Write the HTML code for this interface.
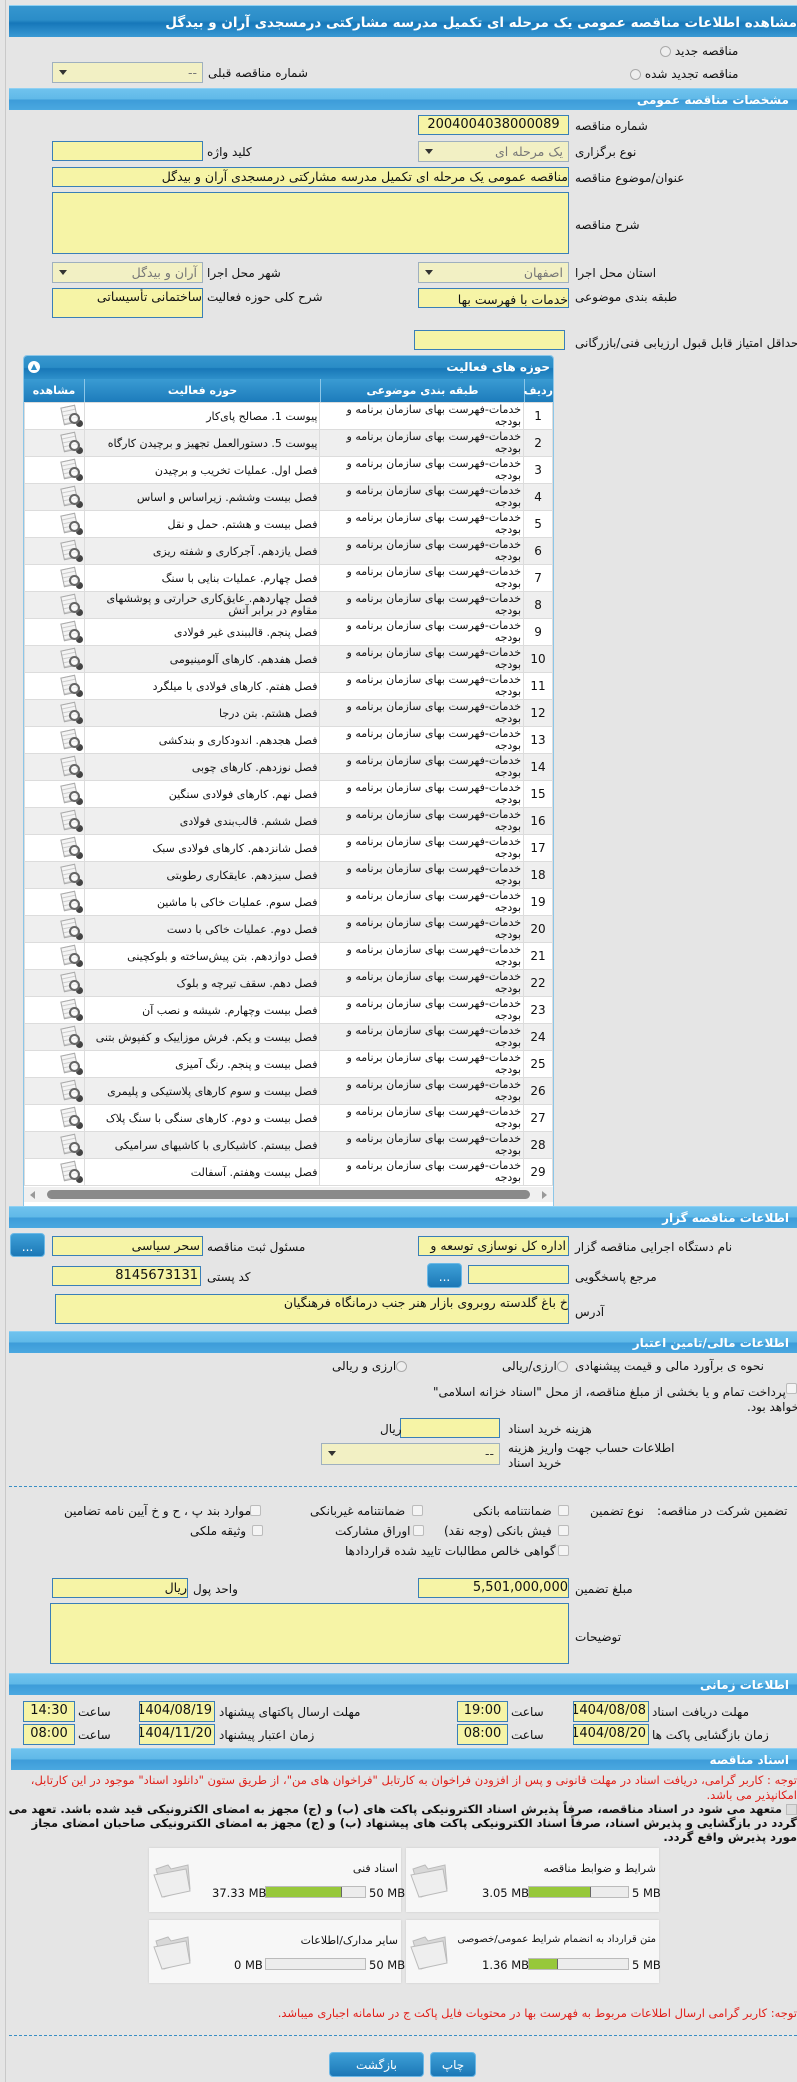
<!DOCTYPE html>
<html><head><meta charset="utf-8">
<style>
*{box-sizing:border-box;margin:0;padding:0}
body{width:797px;height:2082px;background:#e5e5e5;font-family:"DejaVu Sans","Liberation Sans",sans-serif;font-size:11px;color:#111;position:relative;overflow:hidden}
.a{position:absolute;white-space:nowrap;direction:rtl}
.l{position:absolute;white-space:nowrap;direction:rtl;font-size:12px}
.e{position:absolute;white-space:nowrap;direction:ltr;font-size:11.5px}
.in{position:absolute;background:#f6f4a6;border:1px solid #3a7fb8;direction:rtl;text-align:right;font-size:12.5px;padding:0 2px;line-height:18px;overflow:hidden;white-space:nowrap}
.sel{position:absolute;background:#f2f0c4;border:1px solid #9fb0bf;direction:rtl;font-size:12.5px;padding:0 5px;line-height:19px;color:#777;overflow:hidden;white-space:nowrap}
.sel:after{content:"";position:absolute;left:6px;top:7px;border-left:4px solid transparent;border-right:4px solid transparent;border-top:5px solid #333}
.hd{position:absolute;left:9px;right:0;height:22px;background:linear-gradient(#6fc3ee 0%,#60b9e8 48%,#3d9cd9 52%,#4aa8e0 100%);border-top:1px solid #8fd0f2;color:#fff;font-weight:bold;font-size:12px;direction:rtl;padding-right:8px;line-height:22px}
.rad{display:inline-block;width:11px;height:11px;border-radius:50%;border:1px solid #aaa;background:#eee;vertical-align:middle}
.cb{position:absolute;width:11px;height:11px;border:1px solid #bbb;background:#f4f4f4;border-radius:2px}
.btn{position:absolute;background:linear-gradient(#3ea0d8,#1c78b6);border:1px solid #6bb8e6;border-radius:4px;color:#fff;text-align:center;font-size:12px}
table{border-collapse:collapse;direction:rtl}
td{border:1px solid #dcdcdc;font-size:11px;height:27px;padding:0 2px;vertical-align:middle}
tr:nth-child(even) td{background:#efefef}
tr:nth-child(odd) td{background:#fff}
td.n{text-align:center;width:29px;font-size:12px}
td.c{width:204px;line-height:12px}
td.f{width:236px}
td.v{width:60px;padding-left:8px}
.ic{display:block;position:relative;width:22px;height:22px}
.ic:before{content:"";position:absolute;left:2px;top:1px;width:13px;height:16px;background:repeating-linear-gradient(#f4f4f4 0 3px,#ccc 3px 4px);border:1px solid #aaa;transform:rotate(-12deg)}
.ic:after{content:"";position:absolute;left:9px;top:8px;width:7px;height:7px;border:2px solid #666;border-radius:50%;background:rgba(255,255,255,.6);box-shadow:5px 5px 0 -2px #444}
.box{position:absolute;background:#f7f7f7;box-shadow:0 0 2px #ccc;direction:rtl}
.bar{position:absolute;height:12px;background:#ececec;border:1px solid #bbb}
.bar i{position:absolute;left:0;top:0;bottom:0;background:#97c83a;border-right:1px solid #666}
</style></head><body>
<div style="position:absolute;left:5px;top:0;width:1px;height:2082px;background:#c9c9c9"></div>

<div class="hd" style="top:5px;height:32px;line-height:34px;font-size:13.5px;background:linear-gradient(#3596cf 0%,#2b8dc8 45%,#1677b9 55%,#3a9ad4 100%);padding-right:0">مشاهده اطلاعات مناقصه عمومی یک مرحله ای تکمیل مدرسه مشارکتی درمسجدی آران و بیدگل</div>

<div class="a" style="left:660px;top:44px;font-size:12px">مناقصه جدید <span class="rad"></span></div>
<div class="a" style="left:630px;top:67px;font-size:12px">مناقصه تجدید شده <span class="rad"></span></div>
<div class="sel" style="left:52px;top:62px;width:151px;height:21px">--</div>
<div class="l" style="left:208px;top:66px">شماره مناقصه قبلی</div>

<div class="hd" style="top:88px">مشخصات مناقصه عمومی</div>

<div class="in" style="left:418px;top:115px;width:151px;height:20px;text-align:center;font-size:13px">2004004038000089</div>
<div class="l" style="left:575px;top:119px">شماره مناقصه</div>
<div class="sel" style="left:418px;top:141px;width:151px;height:21px">یک مرحله ای</div>
<div class="l" style="left:575px;top:145px">نوع برگزاری</div>
<div class="in" style="left:52px;top:141px;width:151px;height:20px"></div>
<div class="l" style="left:207px;top:145px">کلید واژه</div>
<div class="in" style="left:52px;top:167px;width:517px;height:20px;padding:0">مناقصه عمومی یک مرحله ای تکمیل مدرسه مشارکتی درمسجدی آران و بیدگل</div>
<div class="l" style="left:575px;top:171px">عنوان/موضوع مناقصه</div>
<div class="in" style="left:52px;top:192px;width:517px;height:62px"></div>
<div class="l" style="left:575px;top:218px">شرح مناقصه</div>
<div class="sel" style="left:418px;top:262px;width:151px;height:21px">اصفهان</div>
<div class="l" style="left:575px;top:266px">استان محل اجرا</div>
<div class="sel" style="left:52px;top:262px;width:151px;height:21px">آران و بیدگل</div>
<div class="l" style="left:207px;top:266px">شهر محل اجرا</div>
<div class="in" style="left:418px;top:288px;width:151px;height:20px;line-height:22px;padding:0">خدمات با فهرست بها</div>
<div class="l" style="left:575px;top:290px">طبقه بندی موضوعی</div>
<div class="in" style="left:52px;top:288px;width:151px;height:30px;line-height:16px;padding:0">ساختمانی تأسیساتی</div>
<div class="l" style="left:207px;top:290px">شرح کلی حوزه فعالیت</div>
<div class="in" style="left:414px;top:330px;width:151px;height:20px"></div>
<div class="l" style="left:575px;top:336px">حداقل امتیاز قابل قبول ارزیابی فنی/بازرگانی</div>

<div style="position:absolute;left:23px;top:355px;width:531px;height:853px;background:#fff;border:1px solid #8cc6e8;border-radius:4px 4px 0 0;overflow:hidden">
<div style="height:23px;background:linear-gradient(#3797cf,#2a8cc6 50%,#1878b8 55%,#2e90ca);color:#fff;font-weight:bold;direction:rtl;padding-right:3px;line-height:23px;font-size:12px;position:relative">حوزه های فعالیت<span style="position:absolute;left:4px;top:5px;width:12px;height:12px;border-radius:50%;background:#fff;color:#2a8cc6;font-size:8px;line-height:12px;text-align:center">▲</span></div>
<div style="height:23px;background:linear-gradient(#3a9bd3,#1d7cbc);color:#fff;font-weight:bold;direction:rtl;display:flex;font-size:11px;line-height:23px;text-align:center">
<div style="width:29px;border-left:1px solid #8cc6e8">ردیف</div><div style="width:204px;border-left:1px solid #8cc6e8">طبقه بندی موضوعی</div><div style="width:236px;border-left:1px solid #8cc6e8">حوزه فعالیت</div><div style="width:60px">مشاهده</div></div>
<table style="width:529px">
<tr><td class="n">1</td><td class="c">خدمات-فهرست بهای سازمان برنامه و<br>بودجه</td><td class="f">پیوست 1. مصالح پای‌کار</td><td class="v"><i class="ic"></i></td></tr>
<tr><td class="n">2</td><td class="c">خدمات-فهرست بهای سازمان برنامه و<br>بودجه</td><td class="f">پیوست 5. دستورالعمل تجهیز و برچیدن کارگاه</td><td class="v"><i class="ic"></i></td></tr>
<tr><td class="n">3</td><td class="c">خدمات-فهرست بهای سازمان برنامه و<br>بودجه</td><td class="f">فصل اول. عملیات تخریب و برچیدن</td><td class="v"><i class="ic"></i></td></tr>
<tr><td class="n">4</td><td class="c">خدمات-فهرست بهای سازمان برنامه و<br>بودجه</td><td class="f">فصل بیست وششم. زیراساس و اساس</td><td class="v"><i class="ic"></i></td></tr>
<tr><td class="n">5</td><td class="c">خدمات-فهرست بهای سازمان برنامه و<br>بودجه</td><td class="f">فصل بیست و هشتم. حمل و نقل</td><td class="v"><i class="ic"></i></td></tr>
<tr><td class="n">6</td><td class="c">خدمات-فهرست بهای سازمان برنامه و<br>بودجه</td><td class="f">فصل یازدهم. آجرکاری و شفته ریزی</td><td class="v"><i class="ic"></i></td></tr>
<tr><td class="n">7</td><td class="c">خدمات-فهرست بهای سازمان برنامه و<br>بودجه</td><td class="f">فصل چهارم. عملیات بنایی با سنگ</td><td class="v"><i class="ic"></i></td></tr>
<tr><td class="n">8</td><td class="c">خدمات-فهرست بهای سازمان برنامه و<br>بودجه</td><td class="f" style="line-height:12px">فصل چهاردهم. عایق‌کاری حرارتی و پوششهای<br>مقاوم در برابر آتش</td><td class="v"><i class="ic"></i></td></tr>
<tr><td class="n">9</td><td class="c">خدمات-فهرست بهای سازمان برنامه و<br>بودجه</td><td class="f">فصل پنجم. قالببندی غیر فولادی</td><td class="v"><i class="ic"></i></td></tr>
<tr><td class="n">10</td><td class="c">خدمات-فهرست بهای سازمان برنامه و<br>بودجه</td><td class="f">فصل هفدهم. کارهای آلومینیومی</td><td class="v"><i class="ic"></i></td></tr>
<tr><td class="n">11</td><td class="c">خدمات-فهرست بهای سازمان برنامه و<br>بودجه</td><td class="f">فصل هفتم. کارهای فولادی با میلگرد</td><td class="v"><i class="ic"></i></td></tr>
<tr><td class="n">12</td><td class="c">خدمات-فهرست بهای سازمان برنامه و<br>بودجه</td><td class="f">فصل هشتم. بتن درجا</td><td class="v"><i class="ic"></i></td></tr>
<tr><td class="n">13</td><td class="c">خدمات-فهرست بهای سازمان برنامه و<br>بودجه</td><td class="f">فصل هجدهم. اندودکاری و بندکشی</td><td class="v"><i class="ic"></i></td></tr>
<tr><td class="n">14</td><td class="c">خدمات-فهرست بهای سازمان برنامه و<br>بودجه</td><td class="f">فصل نوزدهم. کارهای چوبی</td><td class="v"><i class="ic"></i></td></tr>
<tr><td class="n">15</td><td class="c">خدمات-فهرست بهای سازمان برنامه و<br>بودجه</td><td class="f">فصل نهم. کارهای فولادی سنگین</td><td class="v"><i class="ic"></i></td></tr>
<tr><td class="n">16</td><td class="c">خدمات-فهرست بهای سازمان برنامه و<br>بودجه</td><td class="f">فصل ششم. قالب‌بندی فولادی</td><td class="v"><i class="ic"></i></td></tr>
<tr><td class="n">17</td><td class="c">خدمات-فهرست بهای سازمان برنامه و<br>بودجه</td><td class="f">فصل شانزدهم. کارهای فولادی سبک</td><td class="v"><i class="ic"></i></td></tr>
<tr><td class="n">18</td><td class="c">خدمات-فهرست بهای سازمان برنامه و<br>بودجه</td><td class="f">فصل سیزدهم. عایقکاری رطوبتی</td><td class="v"><i class="ic"></i></td></tr>
<tr><td class="n">19</td><td class="c">خدمات-فهرست بهای سازمان برنامه و<br>بودجه</td><td class="f">فصل سوم. عملیات خاکی با ماشین</td><td class="v"><i class="ic"></i></td></tr>
<tr><td class="n">20</td><td class="c">خدمات-فهرست بهای سازمان برنامه و<br>بودجه</td><td class="f">فصل دوم. عملیات خاکی با دست</td><td class="v"><i class="ic"></i></td></tr>
<tr><td class="n">21</td><td class="c">خدمات-فهرست بهای سازمان برنامه و<br>بودجه</td><td class="f">فصل دوازدهم. بتن پیش‌ساخته و بلوکچینی</td><td class="v"><i class="ic"></i></td></tr>
<tr><td class="n">22</td><td class="c">خدمات-فهرست بهای سازمان برنامه و<br>بودجه</td><td class="f">فصل دهم. سقف تیرچه و بلوک</td><td class="v"><i class="ic"></i></td></tr>
<tr><td class="n">23</td><td class="c">خدمات-فهرست بهای سازمان برنامه و<br>بودجه</td><td class="f">فصل بیست وچهارم. شیشه و نصب آن</td><td class="v"><i class="ic"></i></td></tr>
<tr><td class="n">24</td><td class="c">خدمات-فهرست بهای سازمان برنامه و<br>بودجه</td><td class="f">فصل بیست و یکم. فرش موزاییک و کفپوش بتنی</td><td class="v"><i class="ic"></i></td></tr>
<tr><td class="n">25</td><td class="c">خدمات-فهرست بهای سازمان برنامه و<br>بودجه</td><td class="f">فصل بیست و پنجم. رنگ آمیزی</td><td class="v"><i class="ic"></i></td></tr>
<tr><td class="n">26</td><td class="c">خدمات-فهرست بهای سازمان برنامه و<br>بودجه</td><td class="f">فصل بیست و سوم کارهای پلاستیکی و پلیمری</td><td class="v"><i class="ic"></i></td></tr>
<tr><td class="n">27</td><td class="c">خدمات-فهرست بهای سازمان برنامه و<br>بودجه</td><td class="f">فصل بیست و دوم. کارهای سنگی با سنگ پلاک</td><td class="v"><i class="ic"></i></td></tr>
<tr><td class="n">28</td><td class="c">خدمات-فهرست بهای سازمان برنامه و<br>بودجه</td><td class="f">فصل بیستم. کاشیکاری با کاشیهای سرامیکی</td><td class="v"><i class="ic"></i></td></tr>
<tr><td class="n">29</td><td class="c">خدمات-فهرست بهای سازمان برنامه و<br>بودجه</td><td class="f">فصل بیست وهفتم. آسفالت</td><td class="v"><i class="ic"></i></td></tr>
</table>
<div style="position:absolute;left:0;right:0;top:831px;height:15px;background:#f0f0f0">
<div style="position:absolute;left:23px;right:23px;top:3px;height:9px;border-radius:5px;background:#8a8a8a"></div>
<div style="position:absolute;left:6px;top:4px;border-top:4px solid transparent;border-bottom:4px solid transparent;border-right:5px solid #999"></div>
<div style="position:absolute;right:6px;top:4px;border-top:4px solid transparent;border-bottom:4px solid transparent;border-left:5px solid #999"></div>
</div>
</div>

<div class="hd" style="top:1206px">اطلاعات مناقصه گزار</div>
<div class="in" style="left:418px;top:1236px;width:151px;height:20px">اداره کل نوسازی  توسعه و</div>
<div class="l" style="left:575px;top:1240px">نام دستگاه اجرایی مناقصه گزار</div>
<div class="in" style="left:52px;top:1236px;width:151px;height:20px">سحر سیاسی</div>
<div class="l" style="left:207px;top:1240px">مسئول ثبت مناقصه</div>
<div class="btn" style="left:10px;top:1233px;width:35px;height:24px;line-height:26px">...</div>
<div class="in" style="left:468px;top:1265px;width:101px;height:19px"></div>
<div class="l" style="left:575px;top:1270px">مرجع پاسخگویی</div>
<div class="btn" style="left:427px;top:1263px;width:35px;height:25px;line-height:27px">...</div>
<div class="in" style="left:52px;top:1266px;width:149px;height:20px;font-size:13px">8145673131</div>
<div class="l" style="left:207px;top:1270px">کد پستی</div>
<div class="in" style="left:55px;top:1294px;width:514px;height:30px;line-height:16px;padding:0">خ باغ گلدسته روبروی بازار هنر جنب درمانگاه فرهنگیان</div>
<div class="l" style="left:575px;top:1305px">آدرس</div>

<div class="hd" style="top:1331px">اطلاعات مالی/تامین اعتبار</div>
<div class="l" style="left:502px;top:1359px"><span class="rad"></span>ارزی/ریالی</div>
<div class="l" style="left:575px;top:1359px">نحوه ی برآورد مالی و قیمت پیشنهادی</div>
<div class="l" style="left:332px;top:1359px"><span class="rad"></span>ارزی و ریالی</div>
<div class="cb" style="left:786px;top:1383px"></div>
<div class="l" style="left:433px;top:1385px">پرداخت تمام و یا بخشی از مبلغ مناقصه، از محل "اسناد خزانه اسلامی"</div>
<div class="l" style="left:747px;top:1400px">خواهد بود.</div>
<div class="in" style="left:400px;top:1418px;width:100px;height:20px"></div>
<div class="l" style="left:380px;top:1422px">ریال</div>
<div class="l" style="left:508px;top:1422px">هزینه خرید اسناد</div>
<div class="sel" style="left:321px;top:1443px;width:179px;height:22px;color:#333">--</div>
<div class="l" style="left:508px;top:1441px">اطلاعات حساب جهت واریز هزینه</div>
<div class="l" style="left:508px;top:1456px">خرید اسناد</div>
<div style="position:absolute;left:9px;right:0;top:1486px;border-top:1px dashed #3a8fc4"></div>

<div class="l" style="left:657px;top:1504px">تضمین شرکت در مناقصه:</div>
<div class="l" style="left:590px;top:1504px">نوع تضمین</div>
<div class="cb" style="left:558px;top:1505px"></div><div class="l" style="left:473px;top:1504px">ضمانتنامه بانکی</div>
<div class="cb" style="left:412px;top:1505px"></div><div class="l" style="left:310px;top:1504px">ضمانتنامه غیربانکی</div>
<div class="cb" style="left:250px;top:1505px"></div><div class="l" style="left:64px;top:1504px">موارد بند پ ، ح و خ آیین نامه تضامین</div>
<div class="cb" style="left:558px;top:1525px"></div><div class="l" style="left:444px;top:1524px">فیش بانکی (وجه نقد)</div>
<div class="cb" style="left:413px;top:1525px"></div><div class="l" style="left:335px;top:1524px">اوراق مشارکت</div>
<div class="cb" style="left:252px;top:1525px"></div><div class="l" style="left:190px;top:1524px">وثیقه ملکی</div>
<div class="cb" style="left:558px;top:1545px"></div><div class="l" style="left:345px;top:1544px">گواهی خالص مطالبات تایید شده قراردادها</div>

<div class="in" style="left:418px;top:1578px;width:151px;height:20px;padding:0;font-size:13px">5,501,000,000</div>
<div class="l" style="left:575px;top:1582px">مبلغ تضمین</div>
<div class="in" style="left:52px;top:1578px;width:136px;height:20px;padding:0">ریال</div>
<div class="l" style="left:193px;top:1582px">واحد پول</div>
<div class="in" style="left:50px;top:1603px;width:519px;height:61px"></div>
<div class="l" style="left:575px;top:1630px">توضیحات</div>

<div class="hd" style="top:1673px">اطلاعات زمانی</div>
<div class="in" style="left:573px;top:1701px;width:76px;height:21px;text-align:center;font-size:13px">1404/08/08</div>
<div class="l" style="left:652px;top:1705px">مهلت دریافت اسناد</div>
<div class="in" style="left:457px;top:1701px;width:51px;height:21px;text-align:center;font-size:13px">19:00</div>
<div class="l" style="left:511px;top:1705px">ساعت</div>
<div class="in" style="left:139px;top:1701px;width:76px;height:21px;text-align:center;font-size:13px">1404/08/19</div>
<div class="l" style="left:219px;top:1705px">مهلت ارسال پاکتهای پیشنهاد</div>
<div class="in" style="left:23px;top:1701px;width:52px;height:21px;text-align:center;font-size:13px">14:30</div>
<div class="l" style="left:78px;top:1705px">ساعت</div>
<div class="in" style="left:573px;top:1724px;width:76px;height:21px;text-align:center;font-size:13px">1404/08/20</div>
<div class="l" style="left:652px;top:1728px">زمان بازگشایی پاکت ها</div>
<div class="in" style="left:457px;top:1724px;width:51px;height:21px;text-align:center;font-size:13px">08:00</div>
<div class="l" style="left:511px;top:1728px">ساعت</div>
<div class="in" style="left:139px;top:1724px;width:76px;height:21px;text-align:center;font-size:13px">1404/11/20</div>
<div class="l" style="left:219px;top:1728px">زمان اعتبار پیشنهاد</div>
<div class="in" style="left:23px;top:1724px;width:52px;height:21px;text-align:center;font-size:13px">08:00</div>
<div class="l" style="left:78px;top:1728px">ساعت</div>

<div class="hd" style="top:1748px;left:11px">اسناد مناقصه</div>
<div class="a" style="right:0;top:1773px;width:790px;white-space:normal;color:#e0201a;font-size:11.5px;line-height:15px">توجه : کاربر گرامی، دریافت اسناد در مهلت قانونی و پس از افزودن فراخوان به کارتابل "فراخوان های من"، از طریق ستون "دانلود اسناد" موجود در این کارتابل، امکانپذیر می باشد.</div>
<div class="a" style="right:0;top:1802px;width:790px;white-space:normal;font-weight:bold;font-size:11.5px;line-height:14px"><span style="display:inline-block;width:11px;height:11px;background:#ddd;border:1px solid #bbb;vertical-align:middle"></span> متعهد می شود در اسناد مناقصه، صرفاً پذیرش اسناد الکترونیکی پاکت های (ب) و (ج) مجهز به امضای الکترونیکی قید شده باشد. تعهد می گردد در بازگشایی و پذیرش اسناد، صرفاً اسناد الکترونیکی پاکت های پیشنهاد (ب) و (ج) مجهز به امضای الکترونیکی صاحبان امضای مجاز مورد پذیرش واقع گردد.</div>

<div class="box" style="left:406px;top:1848px;width:253px;height:64px"><div class="a" style="right:3px;top:14px;font-size:11px">شرایط و ضوابط مناقصه</div></div>
<div class="box" style="left:149px;top:1848px;width:252px;height:64px"><div class="a" style="right:3px;top:14px;font-size:11px">اسناد فنی</div></div>
<div class="box" style="left:406px;top:1920px;width:253px;height:63px"><div class="a" style="right:3px;top:14px;font-size:10px">متن قرارداد به انضمام شرایط عمومی/خصوصی</div></div>
<div class="box" style="left:149px;top:1920px;width:252px;height:63px"><div class="a" style="right:3px;top:14px;font-size:11px">سایر مدارک/اطلاعات</div></div>

<svg style="position:absolute;left:409px;top:1861px" width="42" height="38" viewBox="0 0 42 38"><path d="M4 8 L16 4 L19 8 L36 4 L38 28 L12 36 Z" fill="#d8d8d8" stroke="#bbb"/><path d="M2 14 L34 8 L38 30 L10 36 Z" fill="#eee" stroke="#bbb"/></svg>
<svg style="position:absolute;left:152px;top:1861px" width="42" height="38" viewBox="0 0 42 38"><path d="M4 8 L16 4 L19 8 L36 4 L38 28 L12 36 Z" fill="#d8d8d8" stroke="#bbb"/><path d="M2 14 L34 8 L38 30 L10 36 Z" fill="#eee" stroke="#bbb"/></svg>
<svg style="position:absolute;left:409px;top:1933px" width="42" height="38" viewBox="0 0 42 38"><path d="M4 8 L16 4 L19 8 L36 4 L38 28 L12 36 Z" fill="#d8d8d8" stroke="#bbb"/><path d="M2 14 L34 8 L38 30 L10 36 Z" fill="#eee" stroke="#bbb"/></svg>
<svg style="position:absolute;left:152px;top:1933px" width="42" height="38" viewBox="0 0 42 38"><path d="M4 8 L16 4 L19 8 L36 4 L38 28 L12 36 Z" fill="#d8d8d8" stroke="#bbb"/><path d="M2 14 L34 8 L38 30 L10 36 Z" fill="#eee" stroke="#bbb"/></svg>

<div class="bar" style="left:528px;top:1886px;width:101px"><i style="width:62px"></i></div>
<div class="e" style="left:632px;top:1886px">5 MB</div><div class="e" style="left:482px;top:1886px">3.05 MB</div>
<div class="bar" style="left:265px;top:1886px;width:101px"><i style="width:76px"></i></div>
<div class="e" style="left:369px;top:1886px">50 MB</div><div class="e" style="left:212px;top:1886px">37.33 MB</div>
<div class="bar" style="left:528px;top:1958px;width:101px"><i style="width:29px"></i></div>
<div class="e" style="left:632px;top:1958px">5 MB</div><div class="e" style="left:482px;top:1958px">1.36 MB</div>
<div class="bar" style="left:265px;top:1958px;width:101px"></div>
<div class="e" style="left:369px;top:1958px">50 MB</div><div class="e" style="left:234px;top:1958px">0 MB</div>

<div class="a" style="right:0;top:2006px;color:#e0201a;font-size:11.5px">توجه: کاربر گرامی ارسال اطلاعات مربوط به فهرست بها در محتویات فایل پاکت ج در سامانه اجباری میباشد.</div>
<div style="position:absolute;left:9px;right:0;top:2035px;border-top:1px dashed #3a8fc4"></div>
<div class="btn" style="left:329px;top:2052px;width:95px;height:25px;line-height:25px">بازگشت</div>
<div class="btn" style="left:430px;top:2052px;width:46px;height:25px;line-height:25px">چاپ</div>
</body></html>
